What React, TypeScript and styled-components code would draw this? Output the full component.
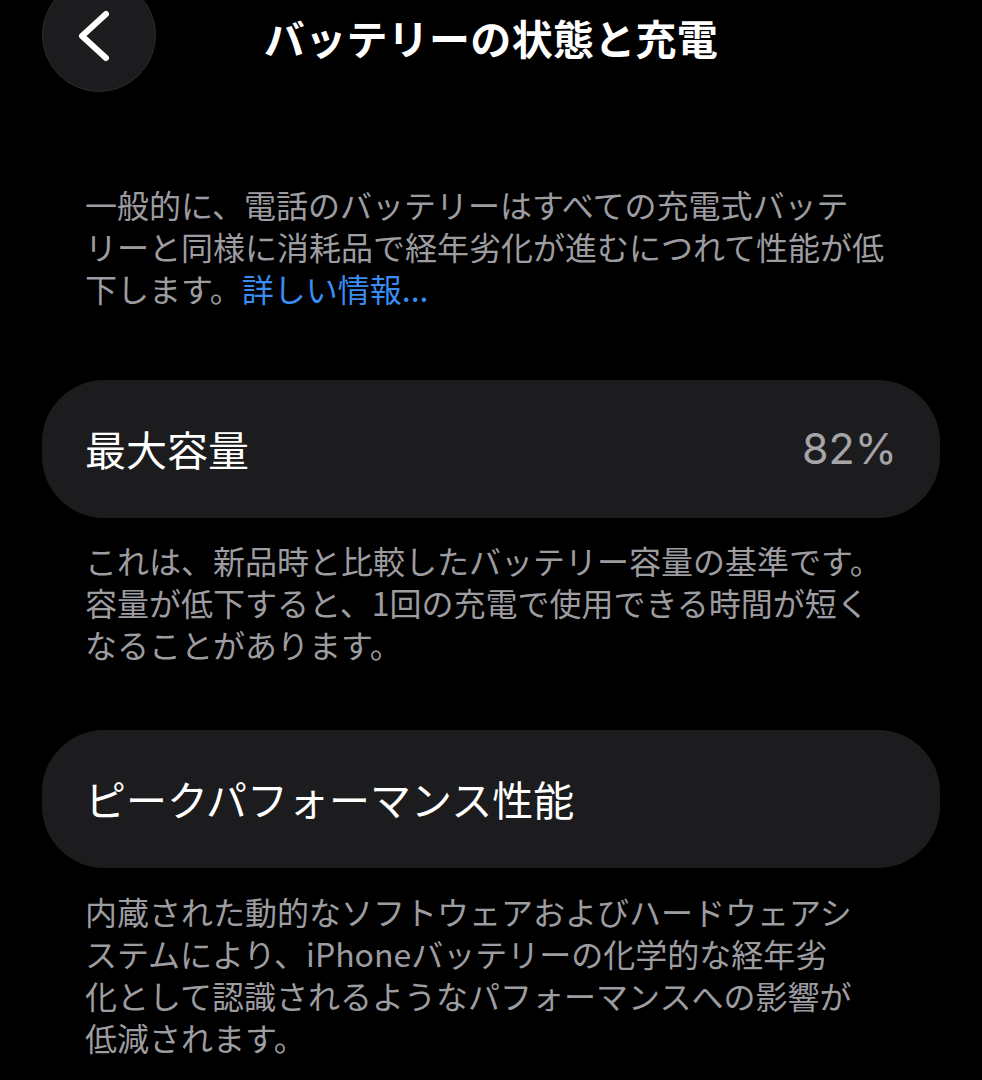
import React from "react";
import styled, { createGlobalStyle } from "styled-components";

const GlobalStyle = createGlobalStyle`
  html, body {
    margin: 0;
    padding: 0;
    background: #000;
  }
  body {
    font-family: "Noto Sans CJK JP", "Noto Sans", sans-serif;
    color: #fff;
    overflow: hidden;
  }
`;

const Page = styled.div`
  width: 982px;
  height: 1080px;
  background: #000;
  padding: 0 42px;
  box-sizing: border-box;
  display: flex;
  flex-direction: column;
`;

const Header = styled.header`
  display: grid;
  grid-template-columns: 1fr auto 1fr;
  align-items: start;
  height: 92px;
`;

const BackButton = styled.button`
  width: 114px;
  height: 114px;
  margin-top: -22px;
  border-radius: 50%;
  border: 1.5px solid #2b2b2e;
  background: #1c1c1e;
  padding: 0;
  display: flex;
  align-items: center;
  justify-content: center;
  justify-self: start;
  box-sizing: border-box;
`;

const Title = styled.h1`
  margin: 0;
  font-size: 41px;
  font-weight: 700;
  line-height: 74px;
  color: #fff;
  letter-spacing: 0.3px;
  white-space: nowrap;
`;

const Paragraph = styled.p<{ $top: number }>`
  margin: ${(p) => p.$top}px 0 0;
  padding: 0 0 0 43px;
  font-size: 32px;
  line-height: 42px;
  color: #9c9ca1;
  white-space: nowrap;
`;

const Link = styled.span`
  color: #3a8cf2;
`;

const Card = styled.div<{ $top: number }>`
  margin-top: ${(p) => p.$top}px;
  height: 138px;
  border-radius: 62px;
  background: #1c1c1e;
  display: flex;
  align-items: center;
  justify-content: space-between;
  padding: 0 43px;
  box-sizing: border-box;
`;

const CardLabel = styled.span`
  font-size: 41px;
  line-height: 1;
  color: #fff;
  margin-top: -2px;
`;

const CardValue = styled.span`
  font-family: "Inter", "Liberation Sans", sans-serif;
  font-size: 43px;
  line-height: 1;
  color: #a4a4a9;
  margin-top: -2px;
`;

const Chevron = () => (
  <svg width="114" height="114" viewBox="0 0 114 114" style={{ marginLeft: -3 }}>
    <polyline
      points="65,36 41,58 65,80"
      fill="none"
      stroke="#fff"
      strokeWidth="6"
      strokeLinecap="round"
      strokeLinejoin="round"
    />
  </svg>
);

export default function App() {
  return (
    <>
      <GlobalStyle />
      <Page>
        <Header>
          <BackButton aria-label="戻る">
            <Chevron />
          </BackButton>
          <Title>バッテリーの状態と充電</Title>
          <span />
        </Header>

        <Paragraph $top={91}>
          一般的に、電話のバッテリーはすべての充電式バッテ
          <br />
          リーと同様に消耗品で経年劣化が進むにつれて性能が低
          <br />
          下します。<Link>詳しい情報...</Link>
        </Paragraph>

        <Card $top={71}>
          <CardLabel>最大容量</CardLabel>
          <CardValue>82%</CardValue>
        </Card>

        <Paragraph $top={21}>
          これは、新品時と比較したバッテリー容量の基準です。
          <br />
          容量が低下すると、1回の充電で使用できる時間が短く
          <br />
          なることがあります。
        </Paragraph>

        <Card $top={65}>
          <CardLabel>ピークパフォーマンス性能</CardLabel>
        </Card>

        <Paragraph $top={22}>
          内蔵された動的なソフトウェアおよびハードウェアシ
          <br />
          ステムにより、iPhoneバッテリーの化学的な経年劣
          <br />
          化として認識されるようなパフォーマンスへの影響が
          <br />
          低減されます。
        </Paragraph>
      </Page>
    </>
  );
}
